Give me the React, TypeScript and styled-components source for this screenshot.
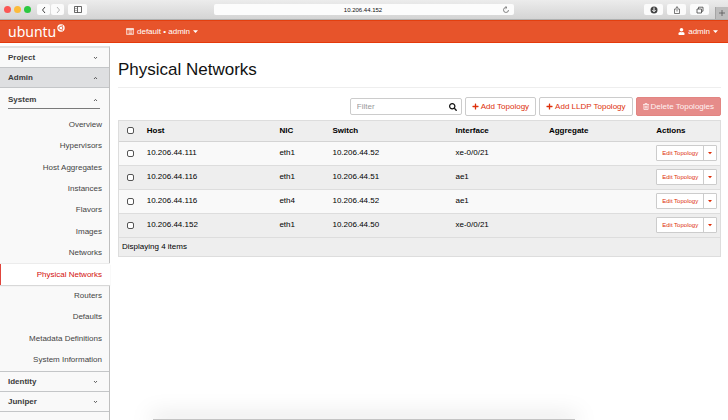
import React from "react";
import styled, { createGlobalStyle, css } from "styled-components";
import { FaPlus, FaUser, FaSearch } from "react-icons/fa";

const GlobalStyle = createGlobalStyle`
  * { box-sizing: border-box; }
  body { margin: 0; background: #fff; }
  body, button, input { font-family: "Liberation Sans", Arial, sans-serif; }
  body { font-size: 8px; line-height: 12px; color: #222; }
  svg { display: block; flex: none; }
`;

const Page = styled.div`
  display: flex;
  flex-direction: column;
  min-height: 100vh;
`;

/* Browser chrome */
const BrowserBar = styled.div`
  display: grid;
  grid-template-columns: 1fr minmax(0, 300px) 1fr;
  align-items: center;
  height: 20px;
  background: linear-gradient(#ececec, #d4d4d4);
  border-bottom: 1px solid #aeb0b0;
`;

const BarGroup = styled.div<{ $end?: boolean }>`
  display: flex;
  align-items: center;
  gap: 4px;
  height: 100%;
  padding-left: 4px;
  ${(p) => p.$end && css`justify-content: flex-end; padding-left: 0;`}
`;

const Lights = styled.div`
  display: flex;
  gap: 3px;
  margin-right: 2px;
`;

const Light = styled.span<{ $color: string }>`
  width: 7px;
  height: 7px;
  border-radius: 50%;
  background: ${(p) => p.$color};
`;

const NavPair = styled.div`
  display: flex;
  gap: 1px;
`;

const ChromeButton = styled.button<{ $narrow?: boolean }>`
  display: flex;
  align-items: center;
  justify-content: center;
  width: ${(p) => (p.$narrow ? 13 : 19)}px;
  height: 11px;
  padding: 0;
  border: 0;
  border-radius: 2px;
  background: #fbfbfb;
  color: #444;
`;

const NewTab = styled.button`
  display: flex;
  align-items: center;
  justify-content: center;
  align-self: flex-end;
  width: 13px;
  height: 12px;
  margin-left: 2px;
  padding: 0;
  border: 0;
  border-left: 1px solid #a5a5a5;
  background: #bdbdbd;
  color: #555;
`;

const AddressBar = styled.div`
  display: flex;
  align-items: center;
  height: 11px;
  padding-right: 2px;
  border-radius: 2px;
  background: #fcfcfc;
`;

const Address = styled.input`
  flex: 1;
  min-width: 0;
  height: 11px;
  padding: 0 0 0 10px;
  border: 0;
  background: transparent;
  color: #111;
  font-size: 6px;
  text-align: center;
`;

const Reload = styled.button`
  display: flex;
  padding: 0;
  border: 0;
  margin-right: 2px;
  background: none;
  color: #555;
`;

/* Application header */
const Header = styled.header`
  display: flex;
  align-items: center;
  height: 23px;
  padding: 0 10px 0 8px;
  background: #e7542b;
  border-top: 1px solid #e3400f;
  border-bottom: 1px solid #e5390b;
`;

const Brand = styled.a`
  display: flex;
  width: 118px;
  color: #fff;
  font: 14px/20px "Noto Sans", sans-serif;
  text-decoration: none;

  svg { margin: 2px 0 0 1px; }
`;

const HeaderMenu = styled.button<{ $end?: boolean }>`
  display: flex;
  align-items: center;
  gap: 3px;
  margin-left: ${(p) => (p.$end ? "auto" : "0")};
  padding: 0;
  border: 0;
  background: none;
  color: #fff;
  font-size: 8px;
  line-height: 12px;
`;

/* Sidebar */
const Body = styled.div`
  display: flex;
  flex: 1;
`;

const Sidebar = styled.nav`
  flex: none;
  width: 110px;
  margin-top: 3px;
  background: #f9f9f9;
  border-top: 2px solid #e2e2e2;
  border-right: 1px solid #bfbfbf;
`;

const Section = styled.button<{ $active?: boolean }>`
  display: flex;
  align-items: center;
  justify-content: space-between;
  width: 100%;
  height: 20px;
  padding: 0 11px 0 8px;
  border: 0;
  border-bottom: 1px solid #c4c6c8;
  background: ${(p) => (p.$active ? "#dedfe1" : "transparent")};
  color: #3c3c3c;
  font-size: 8px;
  font-weight: bold;
  text-align: left;
`;

const SubSection = styled(Section)`
  width: auto;
  align-self: stretch;
  margin: 3px 9px 0 8px;
  padding: 0 2px 0 0;
  height: 18px;
  border-bottom: 1px solid #7a7a7a;
`;

const SubPanel = styled.div`
  display: flex;
  flex-direction: column;
  border-bottom: 1px solid #c4c6c8;
`;

const NavList = styled.ul`
  display: grid;
  grid-auto-rows: 1fr;
  min-height: 257px;
  margin: 5px 0 0;
  padding: 0;
  list-style: none;
`;

const NavLink = styled.a<{ $active?: boolean }>`
  display: flex;
  align-items: center;
  justify-content: flex-end;
  height: 100%;
  padding-right: 7px;
  color: #444;
  text-decoration: none;
  ${(p) =>
    p.$active &&
    css`
      margin-right: -1px;
      padding-right: 8px;
      border-left: 1px solid #e0453c;
      background: #fff;
      box-shadow: 0 1px 1px #d8d8d8, 0 -1px 0 #ececec;
      color: #d3100c;
    `}
`;

/* Main panel */
const Main = styled.main`
  flex: 1;
  min-width: 0;
  padding: 15px 7px 0 8px;
`;

const Title = styled.h1`
  margin: 0 0 9px;
  padding-bottom: 5px;
  border-bottom: 1px solid #eee;
  color: #111;
  font-size: 17px;
  font-weight: normal;
  line-height: 24px;
`;

const Toolbar = styled.div`
  display: flex;
  align-items: center;
  justify-content: flex-end;
  gap: 3px;
  margin-bottom: 4px;
`;

const FilterBox = styled.label`
  display: flex;
  align-items: center;
  width: 112px;
  height: 17px;
  padding: 0 4px 0 6px;
  border: 1px solid #ccc;
  border-radius: 2px;
  color: #111;
`;

const FilterInput = styled.input`
  flex: 1;
  min-width: 0;
  padding: 0;
  border: 0;
  outline: 0;
  background: none;
  font-size: 8px;

  &::placeholder { color: #999; opacity: 1; }
`;

const Button = styled.button<{ $danger?: boolean }>`
  display: flex;
  align-items: center;
  gap: 2px;
  height: 19px;
  padding: 0 6px;
  border: 1px solid ${(p) => (p.$danger ? "#e28582" : "#ccc")};
  border-radius: 2px;
  background: ${(p) => (p.$danger ? "#e68c8a" : "#fff")};
  color: ${(p) => (p.$danger ? "#fff3f2" : "#dd2f0a")};
  font-size: 8px;
  white-space: nowrap;
`;

const Table = styled.table`
  width: 100%;
  table-layout: fixed;
  border-collapse: collapse;
  outline: 1px solid #ddd;
  outline-offset: -1px;
  color: #000;
`;

const Col = styled.col<{ $share: number }>`
  width: ${(p) => p.$share}%;
`;

const Th = styled.th`
  height: 21px;
  padding: 1px 4px 0;
  border-bottom: 1px solid #d4d4d4;
  background: #eee;
  text-align: left;
`;

const Row = styled.tr`
  background: #f9f9f9;
  &:nth-child(even) { background: #eee; }
`;

const Td = styled.td`
  height: 24px;
  padding: 0 4px;
  border-bottom: 1px solid #ddd;
`;

const FootCell = styled.td`
  height: 20px;
  padding: 0 4px;
  background: #eee;
`;

const Check = styled.input`
  display: block;
  appearance: none;
  width: 7px;
  height: 7px;
  margin: 0 0 0 5px;
  border: 1px solid #555;
  border-radius: 2px;
  background: #fff;

  &:checked { background: #555; }
`;

const SplitButton = styled.div`
  display: inline-flex;
  height: 16px;
  vertical-align: middle;
  border: 1px solid #ccc;
  border-radius: 1px;
  background: #fff;
`;

const SplitPart = styled.button<{ $caret?: boolean }>`
  display: flex;
  align-items: center;
  justify-content: center;
  padding: 0 ${(p) => (p.$caret ? 4 : 5)}px;
  border: 0;
  border-left: ${(p) => (p.$caret ? "1px solid #ccc" : "0")};
  background: none;
  color: #dd2f0a;
  font-size: 6px;
  white-space: nowrap;
`;

const DockShadow = styled.div`
  position: fixed;
  right: 21%;
  bottom: 0;
  left: 21%;
  height: 1px;
  background: #c4c4c4;
  box-shadow: 0 0 22px 2px rgba(0, 0, 0, 0.26);
  pointer-events: none;
`;

const Line = ({ d, w = 8, h = 8, stroke = 1 }: { d: string; w?: number; h?: number; stroke?: number }) => (
  <svg width={w} height={h} viewBox={`0 0 ${w} ${h}`} fill="none" stroke="currentColor" strokeWidth={stroke} aria-hidden>
    <path d={d} />
  </svg>
);

const Chevron = ({ up }: { up?: boolean }) => (
  <Line w={5} h={4} stroke={0.8} d={up ? "M1 3 2.5 1.4 4 3" : "M1 1 2.5 2.6 4 1"} />
);

const Caret = ({ size = 5 }: { size?: number }) => (
  <svg width={size} height={size} viewBox="0 0 10 10" fill="currentColor" aria-hidden>
    <path d="M0 2.5h10L5 8z" />
  </svg>
);

const Friends = () => (
  <svg width="8" height="8" viewBox="0 0 16 16" aria-hidden>
    <circle cx="8" cy="8" r="7.4" fill="#fff" />
    <circle cx="8" cy="8" r="3.7" fill="none" stroke="#e7542b" strokeWidth="1.8" />
    <g fill="#e7542b" stroke="#fff" strokeWidth=".7">
      <circle cx="3.2" cy="8" r="1.6" />
      <circle cx="10.4" cy="3.8" r="1.6" />
      <circle cx="10.4" cy="12.2" r="1.6" />
    </g>
  </svg>
);

const ListIcon = () => (
  <svg width="8" height="7" viewBox="0 0 16 14" fill="none" stroke="currentColor" aria-hidden>
    <rect x=".8" y=".8" width="14.4" height="12.4" rx="1" strokeWidth="1.4" />
    <path d="M1 2.4h14" strokeWidth="2.4" />
    <path d="M3 5.5h2M6 5.5h7M3 8.2h2M6 8.2h7M3 10.9h2M6 10.9h7" strokeWidth="1.4" />
  </svg>
);

const TrashIcon = () => (
  <svg width="6" height="7" viewBox="0 0 12 14" fill="none" stroke="currentColor" strokeWidth="1.5" aria-hidden>
    <path d="M0 3h12M4 3V1h4v2M1.8 3v10h8.4V3M4.3 5.5v5.5M6 5.5v5.5M7.8 5.5v5.5" />
  </svg>
);

const navItems = [
  "Overview", "Hypervisors", "Host Aggregates", "Instances", "Flavors", "Images",
  "Networks", "Physical Networks", "Routers", "Defaults", "Metadata Definitions", "System Information",
];

const columns = [
  { label: "Host", share: 22 },
  { label: "NIC", share: 8.8 },
  { label: "Switch", share: 20.4 },
  { label: "Interface", share: 15.5 },
  { label: "Aggregate", share: 17.8 },
  { label: "Actions", share: 11.4 },
];

const rows = [
  ["10.206.44.111", "eth1", "10.206.44.52", "xe-0/0/21"],
  ["10.206.44.116", "eth1", "10.206.44.51", "ae1"],
  ["10.206.44.116", "eth4", "10.206.44.52", "ae1"],
  ["10.206.44.152", "eth1", "10.206.44.50", "xe-0/0/21"],
];

export default function App() {
  return (
    <Page>
      <GlobalStyle />
      <BrowserBar>
        <BarGroup>
          <Lights>
            <Light $color="#fb5754" />
            <Light $color="#fcbb3b" />
            <Light $color="#2bc840" />
          </Lights>
          <NavPair>
            <ChromeButton $narrow aria-label="Back"><Line d="M5 1 2.5 4 5 7" /></ChromeButton>
            <ChromeButton $narrow aria-label="Forward" disabled><Line d="M3 1 5.5 4 3 7" stroke={0.4} /></ChromeButton>
          </NavPair>
          <ChromeButton aria-label="Toggle sidebar">
            <Line w={8} h={7} d="M.5 .5h7v6h-7zM3.5 .5v6M1.5 2.5h1M1.5 4.5h1" stroke={0.8} />
          </ChromeButton>
        </BarGroup>
        <AddressBar>
          <Address aria-label="Address" defaultValue="10.206.44.152" />
          <Reload aria-label="Reload">
            <Line d="M6.5 4a2.5 2.5 0 1 1-2.2-2.5M3.4 .2 5 1.5 3.6 2.8" stroke={0.7} />
          </Reload>
        </AddressBar>
        <BarGroup $end>
          <ChromeButton aria-label="Downloads">
            <svg width="8" height="8" viewBox="0 0 16 16" aria-hidden>
              <circle cx="8" cy="8" r="7" fill="#444" />
              <path d="M8 3v8M4.8 8 8 11.5 11.2 8" fill="none" stroke="#fff" strokeWidth="2" />
            </svg>
          </ChromeButton>
          <ChromeButton aria-label="Share"><Line d="M3 3H1.5v4.5h5V3H5M4 5.5V.8M2.6 2 4 .7 5.4 2" stroke={0.7} /></ChromeButton>
          <ChromeButton aria-label="Show tabs"><Line d="M1 3h4.5v4H1zM2.5 3V1.2H7v4H5.5" stroke={0.8} /></ChromeButton>
          <NewTab aria-label="New tab"><Line d="M4 1v6M1 4h6" stroke={0.8} /></NewTab>
        </BarGroup>
      </BrowserBar>

      <Header>
        <Brand href="#">ubuntu<Friends /></Brand>
        <HeaderMenu><ListIcon />default • admin<Caret /></HeaderMenu>
        <HeaderMenu $end><FaUser size={7} />admin<Caret /></HeaderMenu>
      </Header>

      <Body>
        <Sidebar>
          <Section>Project<Chevron /></Section>
          <Section $active>Admin<Chevron up /></Section>
          <SubPanel>
            <SubSection>System<Chevron up /></SubSection>
            <NavList>
              {navItems.map((item) => (
                <li key={item}>
                  <NavLink href="#" $active={item === "Physical Networks"}>{item}</NavLink>
                </li>
              ))}
            </NavList>
          </SubPanel>
          <Section>Identity<Chevron /></Section>
          <Section>Juniper<Chevron /></Section>
        </Sidebar>

        <Main>
          <Title>Physical Networks</Title>
          <Toolbar>
            <FilterBox>
              <FilterInput placeholder="Filter" aria-label="Filter" />
              <FaSearch size={8} />
            </FilterBox>
            <Button><FaPlus size={7} />Add Topology</Button>
            <Button><FaPlus size={7} />Add LLDP Topology</Button>
            <Button $danger><TrashIcon />Delete Topologies</Button>
          </Toolbar>
          <Table>
            <colgroup>
              <Col $share={4.1} />
              {columns.map((c) => <Col key={c.label} $share={c.share} />)}
            </colgroup>
            <thead>
              <tr>
                <Th><Check type="checkbox" aria-label="Select all" /></Th>
                {columns.map((c) => <Th key={c.label}>{c.label}</Th>)}
              </tr>
            </thead>
            <tbody>
              {rows.map((cells, i) => (
                <Row key={i}>
                  <Td><Check type="checkbox" aria-label={`Select ${cells[0]} ${cells[1]}`} /></Td>
                  {cells.map((cell, j) => <Td key={j}>{cell}</Td>)}
                  <Td />
                  <Td>
                    <SplitButton>
                      <SplitPart>Edit Topology</SplitPart>
                      <SplitPart $caret aria-label="More actions"><Caret size={4} /></SplitPart>
                    </SplitButton>
                  </Td>
                </Row>
              ))}
            </tbody>
            <tfoot>
              <tr><FootCell colSpan={7}>Displaying 4 items</FootCell></tr>
            </tfoot>
          </Table>
        </Main>
      </Body>
      <DockShadow />
    </Page>
  );
}
